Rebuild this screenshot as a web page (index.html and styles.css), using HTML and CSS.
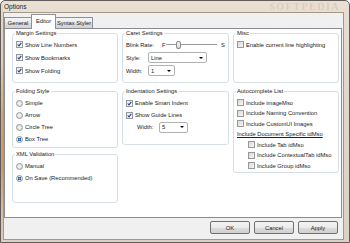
FILE: index.html
```html
<!DOCTYPE html>
<html lang="en">
<head>
  <meta charset="UTF-8">
  <title>Options</title>
  <link rel="stylesheet" href="styles.css">
</head>
<body>

<div class="window">
  <div class="titlebar">
    <span class="title">Options</span>
    <span class="watermark">SOFTPEDIA</span>
  </div>

  <div class="client">
    <div class="tabs">
      <div class="tab t-general">General</div>
      <div class="tab t-editor active">Editor</div>
      <div class="tab t-syntax">Syntax Styler</div>
    </div>

    <div class="panel">
      <fieldset class="group row1">
        <legend>Margin Settings</legend>
        <div class="opt"><span class="box"><svg width="5" height="5" viewBox="0 0 5 5"><path d="M0.7 2.5 L2 3.9 L4.3 0.8" fill="none" stroke="#283f8a" stroke-width="1.1"/></svg></span>Show Line Numbers</div>
        <div class="opt"><span class="box"><svg width="5" height="5" viewBox="0 0 5 5"><path d="M0.7 2.5 L2 3.9 L4.3 0.8" fill="none" stroke="#283f8a" stroke-width="1.1"/></svg></span>Show Bookmarks</div>
        <div class="opt"><span class="box"><svg width="5" height="5" viewBox="0 0 5 5"><path d="M0.7 2.5 L2 3.9 L4.3 0.8" fill="none" stroke="#283f8a" stroke-width="1.1"/></svg></span>Show Folding</div>
      </fieldset>

      <fieldset class="group row1 caret">
        <legend>Caret Settings</legend>
        <div class="opt">
          <span class="lbl blink">Blink Rate:</span>
          <span class="f">F</span>
          <span class="slider"><span class="thumb"></span></span>
          <span class="s">S</span>
        </div>
        <div class="opt">
          <span class="lbl">Style:</span>
          <span class="combo w-style">Line<span class="arrow"></span></span>
        </div>
        <div class="opt">
          <span class="lbl">Width:</span>
          <span class="combo w-small">1<span class="arrow"></span></span>
        </div>
      </fieldset>

      <fieldset class="group row1">
        <legend>Misc</legend>
        <div class="opt"><span class="box off"></span>Enable current line highlighting</div>
      </fieldset>

      <div class="stack">
        <fieldset class="group folding">
          <legend>Folding Style</legend>
          <div class="opt"><span class="radio"></span>Simple</div>
          <div class="opt"><span class="radio"></span>Arrow</div>
          <div class="opt"><span class="radio"></span>Circle Tree</div>
          <div class="opt"><span class="radio on"></span>Box Tree</div>
        </fieldset>

        <fieldset class="group xml">
          <legend>XML Validation</legend>
          <div class="opt"><span class="radio"></span>Manual</div>
          <div class="opt"><span class="radio on"></span>On Save (Recommended)</div>
        </fieldset>
      </div>

      <fieldset class="group indent">
        <legend>Indentation Settings</legend>
        <div class="opt"><span class="box"><svg width="5" height="5" viewBox="0 0 5 5"><path d="M0.7 2.5 L2 3.9 L4.3 0.8" fill="none" stroke="#283f8a" stroke-width="1.1"/></svg></span>Enable Smart Indent</div>
        <div class="opt"><span class="box"><svg width="5" height="5" viewBox="0 0 5 5"><path d="M0.7 2.5 L2 3.9 L4.3 0.8" fill="none" stroke="#283f8a" stroke-width="1.1"/></svg></span>Show Guide Lines</div>
        <div class="opt guide-width">
          <span class="lbl">Width:</span>
          <span class="combo w-indent">5<span class="arrow"></span></span>
        </div>
      </fieldset>

      <fieldset class="group auto">
        <legend>Autocomplete List</legend>
        <div class="opt"><span class="box off"></span>Include imageMso</div>
        <div class="opt"><span class="box off"></span>Include Naming Convention</div>
        <div class="opt"><span class="box off"></span>Include CustomUI Images</div>
        <div class="opt head">Include Document Specific idMso</div>
        <div class="opt sub"><span class="box off"></span>Include Tab idMso</div>
        <div class="opt sub"><span class="box off"></span>Include ContextualTab idMso</div>
        <div class="opt sub"><span class="box off"></span>Include Group idMso</div>
      </fieldset>
    </div>

    <div class="actions">
      <button>OK</button>
      <button>Cancel</button>
      <button>Apply</button>
    </div>
  </div>
</div>

</body>
</html>
```

FILE: styles.css
```css
* {
  box-sizing: border-box;
}

body {
  margin: 0;
  font-family: "Liberation Sans", Arial, sans-serif;
  font-size: 5.8px;
  color: #222;
}

.window {
  width: 350px;
  height: 243px;
  border: 1px solid #5f5c59;
  border-radius: 5px 5px 0 0;
  display: flex;
  flex-direction: column;
  background:
    linear-gradient(to bottom, #e4d8c8 0, #e0cfb9 60px, #d4a574 115px, #cf9b69 165px, #d9bf9f 210px, #ddd0bf 243px) left top / 2px 100% no-repeat,
    linear-gradient(to bottom, #e9dfd2, #e2d6c6 40%, #ddd1c1);
}

.titlebar {
  height: 11px;
  display: flex;
  align-items: center;
  justify-content: space-between;
  padding: 0 9px 0 3px;
  overflow: hidden;
}

.title {
  font-size: 6.5px;
  color: #1a1a1a;
}

.watermark {
  font-family: "Liberation Serif", serif;
  font-size: 10px;
  line-height: 10px;
  font-weight: bold;
  letter-spacing: 1.5px;
  color: rgba(150, 128, 105, 0.2);
}

.client {
  flex: 1;
  margin: 0 5px 2px 2px;
  border: 1px solid #a49786;
  background: #f0f0f0;
  padding-right: 1px;
  display: flex;
  flex-direction: column;
}

/* tabs */
.tabs {
  height: 15px;
  display: flex;
  align-items: flex-end;
}

.tab {
  height: 11px;
  border: 1px solid #8c8e94;
  border-bottom: 0;
  background: linear-gradient(#f5f5f5, #e9e9e9 50%, #dcdcdc 51%, #d3d3d3);
  line-height: 10px;
  text-align: center;
  white-space: nowrap;
}

.tab + .tab {
  margin-left: -1px;
}

.t-general { width: 28px; }
.t-editor { width: 25px; }
.t-syntax { width: 38px; }

.tab.active {
  height: 15px;
  margin-bottom: -1px;
  background: #fff;
  line-height: 13px;
  position: relative;
  z-index: 1;
}

/* panel */
.panel {
  height: 190px;
  background: #fff;
  border: 1px solid #898c95;
  padding: 1px 1px 0 7px;
  display: grid;
  grid-template-columns: 106px 107px 106px;
  grid-template-rows: 53px auto;
  column-gap: 4px;
  row-gap: 5px;
  align-items: start;
}

.group {
  margin: 0;
  min-width: 0;
  border: 1px solid #d5dfe5;
  border-radius: 3px;
  padding: 2px 3px 0 3px;
}

.group legend {
  padding: 0 1px;
  margin-left: -1px;
  font-size: 5.8px;
  line-height: 7px;
  color: #222;
}

.row1 {
  height: 53px;
  padding-top: 1px;
}

.stack {
  display: flex;
  flex-direction: column;
  gap: 3px;
}

.folding { height: 60px; }
.xml { height: 52px; }
.indent { height: 57px; }
.auto { height: 85px; padding-top: 2.5px; }

.opt {
  display: flex;
  align-items: center;
  gap: 2px;
  height: 12px;
  white-space: nowrap;
}

.row1 .opt {
  height: 13px;
}

.auto .opt {
  height: 10.5px;
}

.auto .head {
  text-decoration: underline;
  text-underline-offset: 1px;
}

.auto .sub {
  padding-left: 11px;
}

/* checkbox and radio */
.box {
  width: 7px;
  height: 7px;
  flex: none;
  border: 1px solid #979898;
  background: linear-gradient(135deg, #e3e8f0, #fbfcfd);
  display: flex;
  align-items: center;
  justify-content: center;
}

.box.off {
  background: linear-gradient(135deg, #d8d8d8, #f7f7f7);
}

.box svg {
  display: block;
}

.radio {
  width: 7px;
  height: 7px;
  flex: none;
  border-radius: 50%;
  border: 1px solid #979898;
  background: radial-gradient(circle, #f8f8f8 0, #dcdcdc 3px);
}

.radio.on {
  background: radial-gradient(circle, #79b0ea 0, #1e5fae 1.5px, #e6e6e6 2px, #d2d2d2 3px);
}

/* caret settings */
.caret .opt {
  gap: 0;
}

.lbl {
  width: 22px;
}

.lbl.blink {
  width: 36px;
}

.f {
  width: 4px;
}

.slider {
  width: 51px;
  height: 9px;
  display: flex;
  align-items: center;
  background: linear-gradient(#9a9a9a, #9a9a9a) center / 100% 1px no-repeat;
}

.thumb {
  width: 5px;
  height: 8px;
  margin-left: 10px;
  border: 1px solid #8a8a8a;
  border-radius: 2px / 3px;
  background: linear-gradient(#fafafa, #dadada);
}

.s {
  margin-left: 4px;
}

.combo {
  height: 11px;
  display: flex;
  align-items: center;
  justify-content: space-between;
  border: 1px solid #b2b2b2;
  border-radius: 2px;
  background: #fff;
  padding: 0 3px 0 2px;
}

.w-style { width: 59px; }
.w-small { width: 27px; }
.w-indent { width: 29px; }

.arrow {
  width: 0;
  height: 0;
  border-left: 2px solid transparent;
  border-right: 2px solid transparent;
  border-top: 2.5px solid #000;
}

.guide-width {
  padding-left: 11px;
}

.guide-width .lbl {
  width: 20px;
}

/* bottom buttons */
.actions {
  height: 21px;
  display: flex;
  justify-content: flex-end;
  align-items: flex-start;
  gap: 4px;
  padding: 3px 4px 0 0;
}

.actions button {
  width: 40px;
  height: 13px;
  padding: 0;
  font-family: inherit;
  font-size: 5.8px;
  color: #222;
  border: 1px solid #707070;
  border-radius: 2px;
  background: linear-gradient(#f3f3f3, #ebebeb 50%, #dddddd 51%, #cfcfcf);
}
```
